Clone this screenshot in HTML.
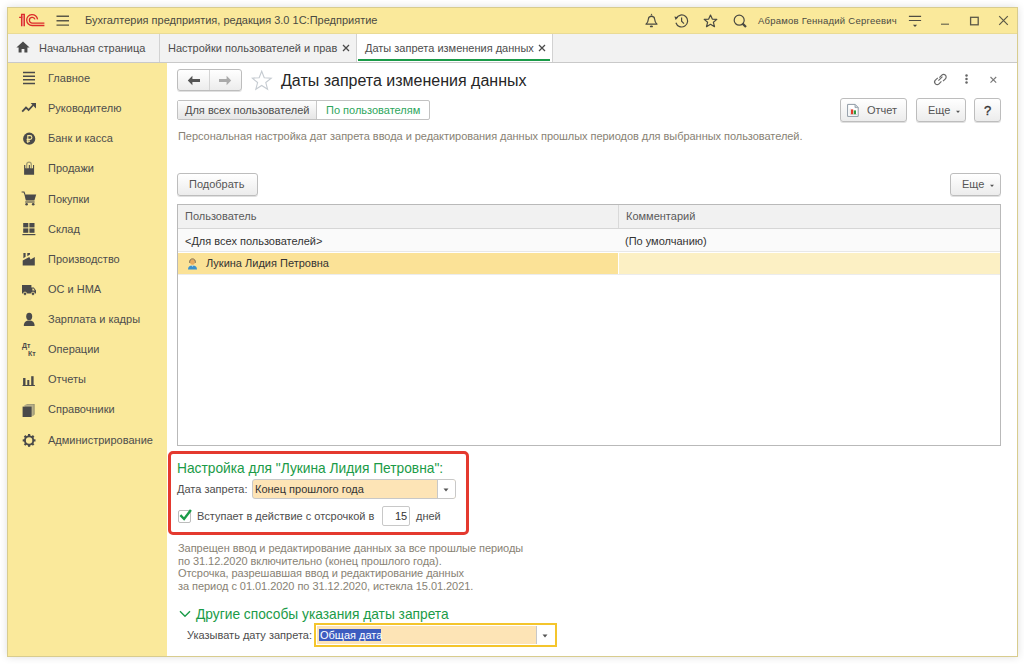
<!DOCTYPE html>
<html><head><meta charset="utf-8">
<style>
*{margin:0;padding:0;box-sizing:border-box}
html,body{width:1024px;height:664px;overflow:hidden;background:#fff}
body{font-family:"Liberation Sans",sans-serif;font-size:11px;color:#4d4d4d;position:relative}
.a{position:absolute;white-space:nowrap;line-height:13px}
#win{position:absolute;left:7px;top:7px;width:1011px;height:650px;border:1px solid #d8cc8e;background:#fff;box-shadow:0 0 8px rgba(0,0,0,0.13)}
#hdr{position:absolute;left:8px;top:8px;width:1009px;height:26px;background:#fae99b;border-bottom:1px solid #eadb95}
#tabs{position:absolute;left:8px;top:34px;width:1009px;height:29px;background:#f2f2f2;border-bottom:1px solid #c9c9c9}
#side{position:absolute;left:8px;top:63px;width:159px;height:593px;background:#fae99b}
.tab{position:absolute;top:0;height:28px;border-right:1px solid #cfcfcf}
.ico{position:absolute}
.btn{position:absolute;height:22px;border:1px solid #bdbdbd;border-radius:3px;background:linear-gradient(#fff,#ececec);box-shadow:0 1px 0 rgba(0,0,0,0.12)}
.g{color:#1b9b47}
</style></head><body>
<div id="win"></div>
<div id="hdr"></div>
<div id="tabs"></div>
<div id="side"></div>
<!-- header -->
<svg class="ico" style="left:19px;top:13px" width="28" height="15" viewBox="0 0 28 15">
  <rect x="2.6" y="1.6" width="2.7" height="11.6" fill="#eea58f"/>
  <g fill="none" stroke="#dc2b2b" stroke-width="1.3">
    <path d="M0.1 4.3 H2.6 V13.3"/>
    <path d="M2.6 4.9 V1.4 H5.3 V13.3"/>
    <path d="M18.55 6.4 A5.45 5.45 0 1 0 13.15 12.5 H25.4"/>
    <path d="M15.98 6.42 A2.85 2.85 0 1 0 13.25 10.1 H25.4"/>
  </g>
</svg>
<svg class="ico" style="left:56px;top:15px" width="14" height="11" viewBox="0 0 14 11">
  <g stroke="#5b5847" stroke-width="1.4"><path d="M0.5 1.3H13M0.5 5.7H13M0.5 10.1H13"/></g>
</svg>
<div class="a" style="left:85px;top:14px;color:#4a4a42">Бухгалтерия предприятия, редакция 3.0 1С:Предприятие</div>
<!-- header right -->
<svg class="ico" style="left:645px;top:13px" width="13" height="15" viewBox="0 0 13 15">
  <path d="M6.5 0.6 L7.6 2.4 H5.4 Z" fill="#4a4a42"/>
  <path d="M1 11.2 C2.7 9.5 3.3 8 3.4 6 C3.5 4.4 4.6 3.4 6.5 3.4 C8.4 3.4 9.5 4.4 9.6 6 C9.7 8 10.3 9.5 12 11.2 Z" fill="none" stroke="#4a4a42" stroke-width="1.2" stroke-linejoin="round"/>
  <ellipse cx="6.4" cy="13.4" rx="1.6" ry="0.85" fill="#4a4a42"/>
</svg>
<svg class="ico" style="left:674px;top:14px" width="15" height="14" viewBox="0 0 15 14">
  <g fill="none" stroke="#4a4a42" stroke-width="1.2">
    <path d="M2.3 4.2 A6 6 0 1 1 1.9 8.8"/>
    <path d="M7.6 3.6 V7.2 L10 9.6"/>
  </g>
  <path d="M0.4 2.6 L4.2 3.2 L1.6 5.9 Z" fill="#4a4a42"/>
</svg>
<svg class="ico" style="left:703px;top:14px" width="15" height="14" viewBox="0 0 15 14">
  <path d="M7.5 1 L9.3 5.1 L13.8 5.4 L10.4 8.3 L11.5 12.7 L7.5 10.3 L3.5 12.7 L4.6 8.3 L1.2 5.4 L5.7 5.1 Z" fill="none" stroke="#4a4a42" stroke-width="1.2" stroke-linejoin="round"/>
</svg>
<svg class="ico" style="left:733px;top:14px" width="15" height="14" viewBox="0 0 15 14">
  <circle cx="6.2" cy="6.2" r="5" fill="none" stroke="#4a4a42" stroke-width="1.2"/>
  <path d="M9.6 9.6 L13 13" stroke="#4a4a42" stroke-width="2.2"/>
</svg>
<div class="a" style="left:758px;top:14px;font-size:9.5px;letter-spacing:0.24px;color:#4a4a42">Абрамов Геннадий Сергеевич</div>
<svg class="ico" style="left:908px;top:14px" width="15" height="14" viewBox="0 0 15 14">
  <g stroke="#4f4d42" stroke-width="1.2"><path d="M0.9 2.4H13.1M0.9 6.5H13.1"/></g>
  <path d="M4.9 10.8 H9.1 L7 13 Z" fill="#4a4a42"/>
</svg>
<svg class="ico" style="left:940px;top:22px" width="10" height="4" viewBox="0 0 10 4">
  <path d="M1 2.2 H9" stroke="#6b6850" stroke-width="1.2"/>
</svg>
<svg class="ico" style="left:969px;top:16px" width="11" height="10" viewBox="0 0 11 10">
  <rect x="1.6" y="1.3" width="7.6" height="7.5" fill="none" stroke="#5b5847" stroke-width="1.3"/>
</svg>
<svg class="ico" style="left:998px;top:15px" width="11" height="11" viewBox="0 0 11 11">
  <path d="M1.2 1.2 L9.8 9.8 M9.8 1.2 L1.2 9.8" stroke="#5b5847" stroke-width="1.2"/>
</svg>
<!-- tabs -->
<div style="position:absolute;left:159px;top:34px;width:1px;height:28px;background:#d2d2d2"></div>
<div style="position:absolute;left:356px;top:34px;width:1px;height:28px;background:#d2d2d2"></div>
<div style="position:absolute;left:357px;top:34px;width:195px;height:28px;background:#fff"></div>
<div style="position:absolute;left:552px;top:34px;width:1px;height:28px;background:#d2d2d2"></div>
<div style="position:absolute;left:358px;top:59px;width:192px;height:2px;background:#1a9b48"></div>
<svg class="ico" style="left:16px;top:41px" width="14" height="12" viewBox="0 0 14 12">
  <path d="M7 0.5 L13.6 6.6 H11.4 V11.5 H8.4 V8 H5.6 V11.5 H2.6 V6.6 H0.4 Z" fill="#4a4a4a"/>
</svg>
<div class="a" style="left:39px;top:42px">Начальная страница</div>
<div class="a" style="left:168px;top:42px">Настройки пользователей и прав</div>
<svg class="ico" style="left:342px;top:44px" width="8" height="8" viewBox="0 0 8 8">
  <path d="M1 1 L7 7 M7 1 L1 7" stroke="#4a4a4a" stroke-width="1.25"/>
</svg>
<div class="a" style="left:365px;top:42px">Даты запрета изменения данных</div>
<svg class="ico" style="left:538px;top:44px" width="8" height="8" viewBox="0 0 8 8">
  <path d="M1 1 L7 7 M7 1 L1 7" stroke="#4a4a4a" stroke-width="1.25"/>
</svg>
<!-- sidebar -->
<div class="a" style="left:48px;top:72px">Главное</div>
<div class="a" style="left:48px;top:102px">Руководителю</div>
<div class="a" style="left:48px;top:132px">Банк и касса</div>
<div class="a" style="left:48px;top:162px">Продажи</div>
<div class="a" style="left:48px;top:193px">Покупки</div>
<div class="a" style="left:48px;top:223px">Склад</div>
<div class="a" style="left:48px;top:253px">Производство</div>
<div class="a" style="left:48px;top:283px">ОС и НМА</div>
<div class="a" style="left:48px;top:313px">Зарплата и кадры</div>
<div class="a" style="left:48px;top:343px">Операции</div>
<div class="a" style="left:48px;top:373px">Отчеты</div>
<div class="a" style="left:48px;top:403px">Справочники</div>
<div class="a" style="left:48px;top:434px">Администрирование</div>

<svg class="ico" style="left:22px;top:71px" width="14" height="14" viewBox="0 0 14 14">
  <g stroke="#4a4a4a" stroke-width="1.5"><path d="M1 1.6H13M1 5.2H13M1 8.8H13M1 12.4H13"/></g>
</svg>
<svg class="ico" style="left:21px;top:102px" width="16" height="11" viewBox="0 0 16 11">
  <path d="M1.2 9.6 L5 5.6 L7.6 8 L12.2 3" fill="none" stroke="#4a4a4a" stroke-width="1.8"/>
  <path d="M9.6 1 H15 V6.4 Z" fill="#4a4a4a"/>
</svg>
<svg class="ico" style="left:22px;top:132px" width="14" height="14" viewBox="0 0 14 14">
  <circle cx="7.2" cy="6.7" r="6.1" fill="#4a4a4a"/>
  <path d="M5.8 11 V3.6 H8 A1.9 1.9 0 0 1 8 7.4 H4.6 M4.6 9.1 H8" fill="none" stroke="#fae99b" stroke-width="1.1"/>
</svg>
<svg class="ico" style="left:22px;top:160px" width="14" height="16" viewBox="0 0 14 16">
  <path d="M4.7 8.2 V4.4 A2.3 2.3 0 0 1 9.3 4.4 V8.2" fill="none" stroke="#a39d74" stroke-width="1.3"/>
  <path d="M2.1 5 H3.3 V8.3 H6.8 V5 H7.9 V8.3 H11 V5 H12.1 V14.8 H2.1 Z" fill="#4a4a4a"/>
</svg>
<svg class="ico" style="left:21px;top:191px" width="16" height="15" viewBox="0 0 16 15">
  <path d="M0.6 1 H3 L4 3.6" fill="none" stroke="#4a4a4a" stroke-width="1.2"/>
  <path d="M3.4 3.4 H15.2 L13.4 9.6 H4.8 Z" fill="#4a4a4a"/>
  <path d="M4.2 11 H13.6" stroke="#4a4a4a" stroke-width="1.1"/>
  <circle cx="5.6" cy="13.2" r="1.3" fill="#4a4a4a"/>
  <circle cx="12.2" cy="13.2" r="1.3" fill="#4a4a4a"/>
</svg>
<svg class="ico" style="left:22px;top:222px" width="14" height="14" viewBox="0 0 14 14">
  <rect x="1.2" y="1" width="5.1" height="4.4" fill="#4a4a4a"/>
  <rect x="7.4" y="1" width="5.1" height="4.4" fill="#4a4a4a"/>
  <rect x="1.2" y="6.4" width="5.1" height="4.4" fill="#4a4a4a"/>
  <rect x="7.4" y="6.4" width="5.1" height="4.4" fill="#4a4a4a"/>
  <rect x="0.4" y="12" width="13" height="1.2" fill="#4a4a4a"/>
</svg>
<svg class="ico" style="left:22px;top:252px" width="14" height="14" viewBox="0 0 14 14">
  <path d="M0.7 8.5 L7.3 4.9 L8.6 7.6 L12.8 4.9 V13.5 H0.7 Z" fill="#4a4a4a"/>
  <path d="M1.4 1 H3.6 V4.7 L1.4 6.2 Z" fill="#4a4a4a"/>
  <path d="M5.3 1 H8 V2.4 L5.3 4.2 Z" fill="#4a4a4a"/>
</svg>
<svg class="ico" style="left:21px;top:284px" width="16" height="12" viewBox="0 0 16 12">
  <path d="M1 1 H10.4 V3.6 H12.8 L15 6.4 V9.6 H1 Z" fill="#4a4a4a"/>
  <path d="M11.4 4.4 H12.4 L13.8 6.4 H11.4 Z" fill="#fae99b"/>
  <circle cx="4" cy="9.8" r="1.7" fill="#4a4a4a" stroke="#fae99b" stroke-width="0.8"/>
  <circle cx="12" cy="9.8" r="1.7" fill="#4a4a4a" stroke="#fae99b" stroke-width="0.8"/>
</svg>
<svg class="ico" style="left:22px;top:312px" width="14" height="15" viewBox="0 0 14 15">
  <ellipse cx="7.2" cy="4.4" rx="3" ry="3.6" fill="#4a4a4a"/>
  <path d="M1.8 14 C1.8 10.2 4 8.6 7.2 8.6 C10.4 8.6 12.6 10.2 12.6 14 Z" fill="#4a4a4a"/>
</svg>
<div class="ico" style="left:22px;top:342px;font-size:7px;line-height:8px;font-weight:bold;color:#4a4a4a">Дт</div>
<div class="ico" style="left:28px;top:350px;font-size:7px;line-height:8px;font-weight:bold;color:#4a4a4a">Кт</div>
<svg class="ico" style="left:22px;top:375px" width="14" height="12" viewBox="0 0 14 12">
  <rect x="1.1" y="3" width="2.4" height="7.2" fill="#4a4a4a"/>
  <rect x="5.3" y="5" width="2" height="5.2" fill="#4a4a4a"/>
  <rect x="9.2" y="1.2" width="2.4" height="9" fill="#4a4a4a"/>
  <rect x="0.5" y="10" width="12.4" height="1" fill="#4a4a4a"/>
</svg>
<svg class="ico" style="left:22px;top:403px" width="14" height="15" viewBox="0 0 14 15">
  <path d="M3.2 2.6 L5.2 1 H12.6 V11.4 L10.8 13 Z" fill="#8f8a6a"/>
  <path d="M2 2.8 L3.6 1.6 H11.6 V12.2 L10 13.6 Z" fill="#b8b08a"/>
  <rect x="0.6" y="3.6" width="9" height="10.4" fill="#4a4a4a"/>
</svg>
<svg class="ico" style="left:22px;top:433px" width="14" height="14" viewBox="0 0 14 14">
  <g transform="translate(7.1 7.4)">
    <circle r="4.2" fill="none" stroke="#4a4a4a" stroke-width="1.9"/>
    <g fill="#4a4a4a">
      <rect x="-1.1" y="-6.4" width="2.2" height="2.8"/>
      <rect x="-1.1" y="-6.4" width="2.2" height="2.8" transform="rotate(45)"/>
      <rect x="-1.1" y="-6.4" width="2.2" height="2.8" transform="rotate(90)"/>
      <rect x="-1.1" y="-6.4" width="2.2" height="2.8" transform="rotate(135)"/>
      <rect x="-1.1" y="-6.4" width="2.2" height="2.8" transform="rotate(180)"/>
      <rect x="-1.1" y="-6.4" width="2.2" height="2.8" transform="rotate(225)"/>
      <rect x="-1.1" y="-6.4" width="2.2" height="2.8" transform="rotate(270)"/>
      <rect x="-1.1" y="-6.4" width="2.2" height="2.8" transform="rotate(315)"/>
    </g>
  </g>
</svg>
<!-- content top -->
<div class="btn" style="left:177px;top:69px;width:65px;height:22px"></div>
<div style="position:absolute;left:209px;top:70px;width:1px;height:20px;background:#d4d4d4"></div>
<svg class="ico" style="left:187px;top:75px" width="14" height="11" viewBox="0 0 14 11">
  <path d="M5.4 0.8 L0.8 5.5 L5.4 10.2 V7 H13 V4 H5.4 Z" fill="#555"/>
</svg>
<svg class="ico" style="left:218px;top:75px" width="14" height="11" viewBox="0 0 14 11">
  <path d="M8.6 0.8 L13.2 5.5 L8.6 10.2 V7 H1 V4 H8.6 Z" fill="#aaa"/>
</svg>
<svg class="ico" style="left:251px;top:70px" width="22" height="21" viewBox="0 0 22 21">
  <path d="M10.70 1.20 L13.23 7.72 L20.21 8.11 L14.79 12.53 L16.58 19.29 L10.70 15.50 L4.82 19.29 L6.61 12.53 L1.19 8.11 L8.17 7.72 Z" fill="none" stroke="#c5cbd1" stroke-width="1.1" stroke-linejoin="miter"/>
</svg>
<div class="a" style="left:281px;top:71px;font-size:16px;line-height:19px;color:#262626">Даты запрета изменения данных</div>
<svg class="ico" style="left:932px;top:72px" width="17" height="15" viewBox="0 0 17 15">
  <g fill="none" stroke="#6a6a6a" stroke-width="1.2">
    <path d="M7.4 5.6 L9.8 3.2 A2.3 2.3 0 0 1 13.4 6.8 L11 9.2"/>
    <path d="M9.4 9.4 L7 11.8 A2.3 2.3 0 0 1 3.4 8.2 L5.8 5.8"/>
    <path d="M6.4 8.6 L10.4 4.6"/>
  </g>
</svg>
<svg class="ico" style="left:964px;top:74px" width="5" height="10" viewBox="0 0 5 10">
  <g fill="#666"><circle cx="2.5" cy="1.4" r="1.25"/><circle cx="2.5" cy="5" r="1.25"/><circle cx="2.5" cy="8.5" r="1.25"/></g>
</svg>
<svg class="ico" style="left:989px;top:76px" width="9" height="8" viewBox="0 0 9 8">
  <path d="M1.5 1 L7.2 6.6 M7.2 1 L1.5 6.6" stroke="#777" stroke-width="1.1"/>
</svg>
<!-- toggle -->
<div style="position:absolute;left:177px;top:100px;width:253px;height:20px;border:1px solid #c2c2c2;border-radius:2px;background:#fff"></div>
<div style="position:absolute;left:178px;top:101px;width:139px;height:18px;background:linear-gradient(#fdfdfd,#e6e6e6);border-right:1px solid #c8c8c8"></div>
<div class="a" style="left:185px;top:104px">Для всех пользователей</div>
<div class="a" style="left:326px;top:104px;color:#2ea65c">По пользователям</div>
<!-- right buttons -->
<div class="btn" style="left:840px;top:98px;width:67px;height:24px"></div>
<svg class="ico" style="left:847px;top:103px" width="12" height="14" viewBox="0 0 12 14">
  <path d="M0.6 1.4 H8.2 L11.2 4.4 V13.4 H0.6 Z" fill="#fff" stroke="#8f9aa5" stroke-width="1"/>
  <path d="M8 1.4 V4.6 H11.2" fill="#c9d1d8" stroke="#8f9aa5" stroke-width="0.8"/>
  <path d="M3.2 5.6 V11.4 H10" fill="none" stroke="#b9b9b9" stroke-width="0.6"/>
  <rect x="4" y="6.4" width="2.2" height="4.8" fill="#e23b2a"/>
  <rect x="6.8" y="7.4" width="2.2" height="3.8" fill="#2f9a3f"/>
</svg>
<div class="a" style="left:867px;top:104px;color:#555">Отчет</div>
<div class="btn" style="left:916px;top:98px;width:50px;height:24px"></div>
<div class="a" style="left:928px;top:104px;color:#555">Еще</div>
<svg class="ico" style="left:955px;top:110px" width="6" height="4" viewBox="0 0 6 4"><path d="M1 0.8 H5 L3 2.9 Z" fill="#555"/></svg>
<div class="btn" style="left:974px;top:98px;width:27px;height:24px"></div>
<div class="a" style="left:984px;top:103px;font-size:13px;line-height:15px;color:#333;-webkit-text-stroke:0.3px #333">?</div>
<div class="a" style="left:178px;top:130px;color:#888274;letter-spacing:-0.04px">Персональная настройка дат запрета ввода и редактирования данных прошлых периодов для выбранных пользователей.</div>
<!-- table toolbar -->
<div class="btn" style="left:177px;top:173px;width:81px;height:23px"></div>
<div class="a" style="left:189px;top:178px;color:#555">Подобрать</div>
<div class="btn" style="left:950px;top:173px;width:51px;height:23px"></div>
<div class="a" style="left:962px;top:178px;color:#555">Еще</div>
<svg class="ico" style="left:989px;top:184px" width="6" height="4" viewBox="0 0 6 4"><path d="M1 0.8 H5 L3 2.9 Z" fill="#555"/></svg>
<!-- table -->
<div style="position:absolute;left:177px;top:204px;width:824px;height:242px;border:1px solid #b9b9b9;background:#fff"></div>
<div style="position:absolute;left:178px;top:205px;width:822px;height:24px;background:#f1f1f1;border-bottom:1px solid #d6d6d6"></div>
<div style="position:absolute;left:618px;top:205px;width:1px;height:23px;background:#d9d9d9"></div>
<div class="a" style="left:185px;top:210px;color:#5a5a5a">Пользователь</div>
<div class="a" style="left:626px;top:210px;color:#5a5a5a">Комментарий</div>
<div style="position:absolute;left:178px;top:229px;width:822px;height:23px;background:#fafafa;border-bottom:1px solid #e8e8e8"></div>
<div class="a" style="left:185px;top:235px;color:#333">&lt;Для всех пользователей&gt;</div>
<div class="a" style="left:625px;top:235px;color:#333">(По умолчанию)</div>
<div style="position:absolute;left:178px;top:253px;width:440px;height:21px;background:#fbe297"></div>
<div style="position:absolute;left:619px;top:253px;width:381px;height:21px;background:#fcf0c4"></div>
<div style="position:absolute;left:178px;top:274px;width:822px;height:1px;background:#ececec"></div>
<svg class="ico" style="left:187px;top:258px" width="11" height="12" viewBox="0 0 11 12">
  <path d="M1 11.6 C1 8.6 2.4 7.4 5.5 7.4 C8.6 7.4 10 8.6 10 11.6 Z" fill="#3b91cc"/>
  <path d="M4.4 7.4 L5.5 8.8 L6.6 7.4 Z" fill="#e9f2f8"/>
  <ellipse cx="5.5" cy="4" rx="2.4" ry="2.8" fill="#e8ab5e"/>
  <path d="M2.7 4.9 C2.4 2.2 3.6 0.9 5.5 0.9 C7.4 0.9 8.6 2.2 8.3 4.9" fill="none" stroke="#6b5a45" stroke-width="0.9"/>
</svg>
<div class="a" style="left:206px;top:257px;color:#333">Лукина Лидия Петровна</div>
<!-- red box section -->
<div style="position:absolute;left:168px;top:451px;width:301px;height:84px;border:3px solid #e4392f;border-radius:5px"></div>
<div class="a g" style="left:177px;top:461px;font-size:13.75px;line-height:16px">Настройка для "Лукина Лидия Петровна":</div>
<div class="a" style="left:177px;top:483px">Дата запрета:</div>
<div style="position:absolute;left:252px;top:479px;width:204px;height:20px;border:1px solid #c8c8c8;border-radius:3px;background:#fde4b6"></div>
<div style="position:absolute;left:437px;top:480px;width:18px;height:18px;background:#fff;border-left:1px solid #c8c8c8;border-radius:0 2px 2px 0"></div>
<svg class="ico" style="left:443px;top:488px" width="6" height="4" viewBox="0 0 6 4"><path d="M0.5 0.6 H5.5 L3 3.4 Z" fill="#555"/></svg>
<div class="a" style="left:255px;top:483px;color:#333">Конец прошлого года</div>
<div style="position:absolute;left:178px;top:510px;width:13px;height:13px;border:1px solid #bcbcbc;border-radius:2px;background:#fff"></div>
<svg class="ico" style="left:178px;top:506px" width="16" height="16" viewBox="0 0 16 16">
  <path d="M2.4 9.2 L6.1 13 L12.9 4.1" fill="none" stroke="#1a9b48" stroke-width="2.4"/>
</svg>
<div class="a" style="left:197px;top:510px">Вступает в действие с отсрочкой в</div>
<div style="position:absolute;left:382px;top:506px;width:28px;height:20px;border:1px solid #c8c8c8;border-radius:2px;background:#fff"></div>
<div class="a" style="left:395px;top:510px;color:#333">15</div>
<div class="a" style="left:416px;top:510px">дней</div>
<!-- explanation -->
<div style="position:absolute;left:178px;top:542px;line-height:12.5px;letter-spacing:-0.05px;color:#888274;white-space:nowrap">Запрещен ввод и редактирование данных за все прошлые периоды<br>по 31.12.2020 включительно (конец прошлого года).<br>Отсрочка, разрешавшая ввод и редактирование данных<br>за период с 01.01.2020 по 31.12.2020, истекла 15.01.2021.</div>
<!-- other ways -->
<svg class="ico" style="left:179px;top:610px" width="12" height="8" viewBox="0 0 12 8">
  <path d="M1 1.2 L6 6.2 L11 1.2" fill="none" stroke="#1a9b48" stroke-width="1.4"/>
</svg>
<div class="a g" style="left:196px;top:607px;font-size:13.75px;line-height:16px">Другие способы указания даты запрета</div>
<div class="a" style="left:187px;top:629px">Указывать дату запрета:</div>
<div style="position:absolute;left:314px;top:623px;width:243px;height:24px;border:2px solid #f4c52c;background:#fff"></div>
<div style="position:absolute;left:317px;top:626px;width:220px;height:18px;background:#fde4b6"></div>
<div style="position:absolute;left:536px;top:626px;width:1px;height:18px;background:#c8c8c8"></div>
<svg class="ico" style="left:542px;top:634px" width="6" height="4" viewBox="0 0 6 4"><path d="M0.5 0.6 H5.5 L3 3.4 Z" fill="#555"/></svg>
<div style="position:absolute;left:319px;top:629px;width:62px;height:12px;background:#3d5cc0"></div>
<div class="a" style="left:320px;top:629px;color:#fff">Общая дата</div>
</body></html>
